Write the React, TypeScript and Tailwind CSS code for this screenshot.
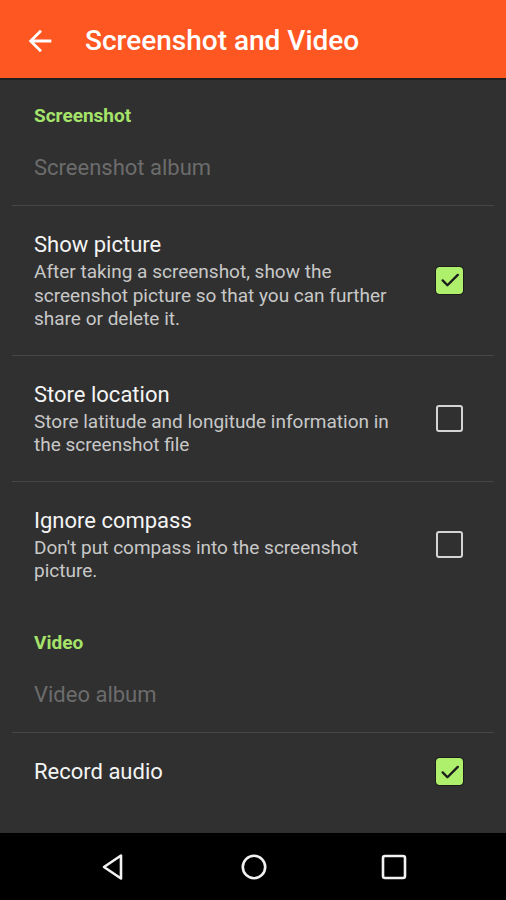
import React from 'react';

const font = { fontFamily: 'Roboto, "Noto Sans", "Liberation Sans", sans-serif' };

const Checkbox = ({ checked }: { checked: boolean }) =>
  checked ? (
    <div className="w-[27px] h-[27px] rounded-[3px] bg-[#aef06b] flex items-center justify-center shrink-0 outline outline-1 outline-[#1c1c1c]">
      <svg width="22" height="22" viewBox="0 0 24 24">
        <path d="M4 12.5l5.2 5.2L20.5 6.5" fill="none" stroke="#1d1d1d" strokeWidth="2.6" strokeLinecap="round" strokeLinejoin="round" />
      </svg>
    </div>
  ) : (
    <div className="w-[27px] h-[27px] rounded-[3px] border-[2.5px] border-[#d4d4d4] shrink-0" />
  );

const Category = ({ label }: { label: string }) => (
  <div className="pt-[26px] px-[22px] text-[19px] leading-[20px] font-bold text-[#a6e36a]">{label}</div>
);

const Album = ({ label }: { label: string }) => (
  <div className="pt-[28px] pb-[23px] px-[22px] text-[22px] leading-[28px] text-[#6c6c6c] border-b border-[#464646]">
    {label}
  </div>
);

const Item = ({ title, summary, checked, divider = true }: { title: string; summary?: string; checked: boolean; divider?: boolean }) => (
  <div className={`flex items-center py-6 pl-[22px] pr-[31px] ${divider ? 'border-b border-[#464646]' : ''}`}>
    <div className="flex-1 pr-5">
      <div className="text-[22px] leading-[30px] text-[#f4f4f4]">{title}</div>
      {summary && <div className="text-[19px] leading-[23.5px] text-[#c8c8c8]">{summary}</div>}
    </div>
    <Checkbox checked={checked} />
  </div>
);

export default function App() {
  return (
    <div className="w-[506px] h-[900px] flex flex-col bg-[#303030]" style={font}>
      {/* Toolbar */}
      <header className="h-[80px] bg-[#ff5722] border-b-2 border-[#1f1f1f] flex items-center shrink-0 pt-[3px]">
        <svg className="ml-[23px]" width="34" height="34" viewBox="0 0 24 24" fill="#fff">
          <path d="M20 11H7.83l5.59-5.59L12 4l-8 8 8 8 1.41-1.41L7.83 13H20v-2z" />
        </svg>
        <h1 className="ml-[28px] text-[28px] font-medium text-white">Screenshot and Video</h1>
      </header>

      {/* Preferences */}
      <div className="flex-1 px-3">
        <Category label="Screenshot" />
        <Album label="Screenshot album" />
        <Item
          title="Show picture"
          summary="After taking a screenshot, show the screenshot picture so that you can further share or delete it."
          checked
        />
        <Item
          title="Store location"
          summary="Store latitude and longitude information in the screenshot file"
          checked={false}
        />
        <Item
          title="Ignore compass"
          summary="Don't put compass into the screenshot picture."
          checked={false}
          divider={false}
        />
        <Category label="Video" />
        <Album label="Video album" />
        <Item title="Record audio" checked divider={false} />
      </div>

      {/* Navigation bar */}
      <nav className="h-[67px] bg-black flex items-center shrink-0">
        <div className="w-[506px] flex items-center justify-center gap-[112px]">
          <svg width="30" height="32" viewBox="0 0 30 32">
            <path d="M6 16L23 4.5v23z" fill="none" stroke="#f2f2f2" strokeWidth="2.6" strokeLinejoin="round" />
          </svg>
          <svg width="28" height="28" viewBox="0 0 28 28">
            <circle cx="14" cy="14" r="11.2" fill="none" stroke="#f2f2f2" strokeWidth="2.6" />
          </svg>
          <svg width="28" height="28" viewBox="0 0 28 28">
            <rect x="3" y="3" width="22" height="22" rx="2" fill="none" stroke="#f2f2f2" strokeWidth="2.6" />
          </svg>
        </div>
      </nav>
    </div>
  );
}
